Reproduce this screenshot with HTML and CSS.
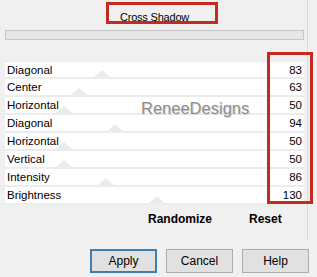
FILE: index.html
```html
<!DOCTYPE html>
<html lang="en">
<head>
    <meta charset="UTF-8">
    <meta name="viewport" content="width=device-width, initial-scale=1.0">
    <title>Cross Shadow</title>
    <link rel="stylesheet" href="styles.css">
</head>
<body>
    <div class="dialog">
        <div class="sheet">
            <div class="panel">
                <div class="title">Cross Shadow</div>
                <div class="bar"></div>
                <div class="sliders" id="sliders"></div>
                <div class="actions">
                    <span class="act">Randomize</span>
                    <span class="act">Reset</span>
                </div>
            </div>
        </div>
        <div class="buttons">
            <button class="btn default">Apply</button>
            <button class="btn">Cancel</button>
            <button class="btn">Help</button>
        </div>

        <div class="mark">ReneeDesigns</div>
        <div class="note note-title"></div>
        <div class="note note-values"></div>
    </div>
    <script>
        const sliders = [
            ["Diagonal", 83],
            ["Center", 63],
            ["Horizontal", 50],
            ["Diagonal", 94],
            ["Horizontal", 50],
            ["Vertical", 50],
            ["Intensity", 86],
            ["Brightness", 130]
        ];

        const list = document.getElementById("sliders");
        sliders.forEach(([name, value]) => {
            const pos = (value / 255 * 100).toFixed(1);
            list.innerHTML += `<div class="row">
                <span class="label">${name}</span>
                <span class="thumb" style="left: ${pos}%"></span>
                <span class="value">${value}</span>
            </div>`;
        });
    </script>
</body>
</html>
```

FILE: styles.css
```css
html, body {
    margin: 0;
    padding: 0;
}
body {
    font-family: "Liberation Sans", Arial, sans-serif;
    font-size: 11px;
    color: #000;
    background-color: #f0f0f0;
    width: 317px;
    height: 277px;
    overflow: hidden;
}
.dialog {
    position: relative;
    height: 277px;
}
.sheet {
    width: 308px;
    height: 240px;
    border-right: 1px solid #d9d9d9;
    padding-top: 5px;
    box-sizing: border-box;
}
.panel {
    margin-left: 5px;
    width: 299px;
    height: 227px;
    background-color: #f0f0f0;
}
.title {
    height: 25px;
    line-height: 25px;
    text-align: center;
    letter-spacing: -0.2px;
}
.bar {
    height: 10px;
    border: 1px solid #c8c8c8;
    background-color: #e6e6e6;
    box-sizing: border-box;
}
.sliders {
    margin-top: 21px;
    font-size: 11.5px;
}
.row {
    position: relative;
    display: flex;
    justify-content: space-between;
    align-items: center;
    height: 18px;
    padding: 0 2px 0 2px;
    background-color: #fff;
    border-bottom: 2px solid #ececec;
    box-sizing: border-box;
    overflow: hidden;
}
.row:first-child {
    border-top: 1px solid #ececec;
}
.label, .value {
    position: relative;
    z-index: 1;
}
.thumb {
    position: absolute;
    bottom: 0;
    width: 0;
    height: 0;
    margin-left: -8px;
    border-left: 8px solid transparent;
    border-right: 8px solid transparent;
    border-bottom: 7px solid #ebebeb;
}
.actions {
    display: flex;
    align-items: center;
    gap: 37px;
    height: 27px;
    padding-left: 143px;
    font-size: 12px;
    font-weight: bold;
}
.buttons {
    display: flex;
    gap: 9px;
    margin: 9px 0 0 90px;
}
.btn {
    width: 67px;
    height: 24px;
    padding: 0;
    font-family: "Liberation Sans", Arial, sans-serif;
    font-size: 12px;
    color: #000;
    background-color: #e1e1e1;
    border: 1px solid #adadad;
}
.btn.default {
    border: 2px solid #3c7fb1;
}
.mark {
    position: absolute;
    left: 141px;
    top: 100px;
    font-size: 16.5px;
    line-height: 1;
    color: #8e8e8e;
    text-shadow: 1px 1px 0 #d8d8d8;
}
.note {
    position: absolute;
    border: 3px solid #c42a20;
    box-sizing: border-box;
}
.note-title {
    left: 106px;
    top: 2px;
    width: 112px;
    height: 22px;
}
.note-values {
    left: 267px;
    top: 52px;
    width: 46px;
    height: 152px;
}
```
